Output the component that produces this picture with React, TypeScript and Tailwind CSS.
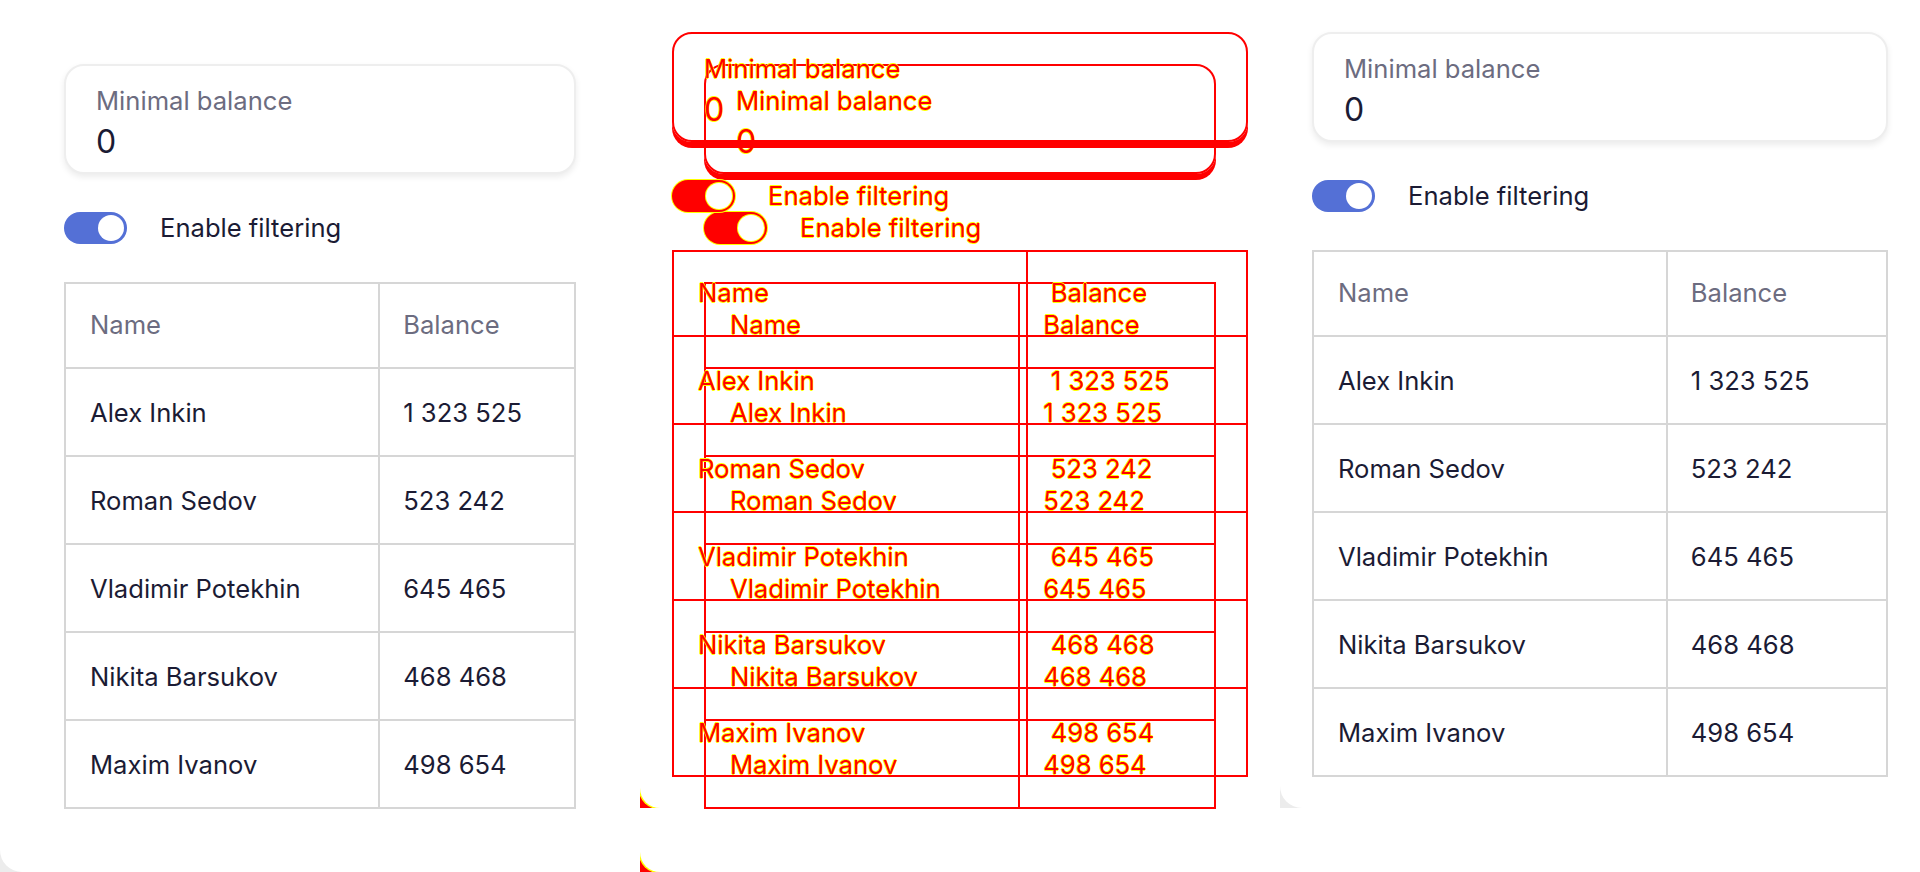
import React from 'react';

type V = 'L' | 'R';

const rows: [string, string][] = [
  ['Alex Inkin', '1 323 525'],
  ['Roman Sedov', '523 242'],
  ['Vladimir Potekhin', '645 465'],
  ['Nikita Barsukov', '468 468'],
  ['Maxim Ivanov', '498 654'],
];

const D =
  'text-[#ff0000] [text-shadow:0.6px_0_0_#ffff00,-0.6px_0_0_#ffff00,0_0.6px_0_#ffff00,0_-0.6px_0_#ffff00]';

function Card({ diff }: { diff: boolean }) {
  return (
    <div
      className={`flex flex-col gap-[8px] rounded-[20px] border-2 pt-[20px] pb-[12px] pl-[30px] ${
        diff
          ? 'border-[#ff0000] shadow-[0_6px_0_0_#ff0000]'
          : 'bg-white border-[#eeeeee] shadow-[0_3px_6px_rgba(0,0,0,0.08)]'
      }`}
    >
      <div className={`text-[25.6px] leading-[30px] ${diff ? D : 'text-[#6c6c80]'}`}>Minimal balance</div>
      <div className={`text-[32px] leading-[36px] ${diff ? D : 'text-[#1b1b34]'}`}>0</div>
    </div>
  );
}

function Toggle({ diff }: { diff: boolean }) {
  return (
    <div className="flex h-[32px] items-center gap-[33px]">
      <div
        className={`flex h-[32px] w-[63px] items-center justify-end rounded-full pr-[3px] ${
          diff ? 'bg-[#ff0000] shadow-[0_0_0_1px_#ffff00]' : 'bg-[#5470d6]'
        }`}
      >
        <div
          className={`h-[26px] w-[26px] rounded-full bg-white ${diff ? 'shadow-[0_0_0_1px_#ffff00]' : ''}`}
        />
      </div>
      <span className={`text-[25.6px] leading-[32px] ${diff ? D : 'text-[#1b1b34]'}`}>Enable filtering</span>
    </div>
  );
}

function Table({ diff }: { diff: boolean }) {
  const line = diff ? 'border-[#ff0000]' : 'border-[#d6d6d6]';
  const head = diff ? D : 'text-[#6c6c80]';
  const body = diff ? D : 'text-[#1b1b34]';
  return (
    <div className={`border-2 ${line}`}>
      <div className="grid h-[83px] grid-cols-[313fr_193fr]">
        <div className={`flex items-center border-r-2 pl-[24px] text-[25.6px] ${line} ${head}`}>Name</div>
        <div className={`flex items-center pl-[23px] text-[25.6px] ${head}`}>Balance</div>
      </div>
      {rows.map(([n, b]) => (
        <div key={n} className={`grid h-[88px] grid-cols-[313fr_193fr] border-t-2 ${line}`}>
          <div className={`flex items-center border-r-2 pl-[24px] pt-[2px] text-[25.6px] ${line} ${body}`}>{n}</div>
          <div className={`flex items-center pl-[23px] pt-[2px] text-[25.6px] ${body}`}>{b}</div>
        </div>
      ))}
    </div>
  );
}

function Screen({ v, diff }: { v: V; diff: boolean }) {
  return (
    <div className={`flex flex-col gap-[38px] ${v === 'L' ? 'p-[64px]' : 'p-[32px]'}`}>
      <Card diff={diff} />
      <Toggle diff={diff} />
      <Table diff={diff} />
    </div>
  );
}

function Shot({ v }: { v: V }) {
  return (
    <div className={`w-[640px] bg-[#ececec] ${v === 'L' ? 'h-[872px]' : 'h-[808px]'}`}>
      <div className="h-full rounded-bl-[22px] bg-white">
        <Screen v={v} diff={false} />
      </div>
    </div>
  );
}

function Wedge() {
  return (
    <div className="absolute bottom-0 left-0 h-[20px] w-[20px] overflow-hidden bg-[#ff0000]">
      <div className="h-full w-full rounded-bl-[20px] bg-white shadow-[0_0_0_1.5px_#ffff00]" />
    </div>
  );
}

export default function App() {
  return (
    <div className="flex h-[872px] w-[1920px] overflow-hidden bg-white [font-family:Inter,'Noto_Sans',sans-serif]">
      <div className="w-[640px] shrink-0">
        <Shot v="L" />
      </div>
      <div className="relative h-[872px] w-[640px] shrink-0 bg-white">
        <div className="absolute left-0 top-0 h-[872px] w-[640px]">
          <Screen v="L" diff />
          <Wedge />
        </div>
        <div className="absolute left-0 top-0 h-[808px] w-[640px]">
          <Screen v="R" diff />
          <Wedge />
        </div>
      </div>
      <div className="w-[640px] shrink-0">
        <Shot v="R" />
      </div>
    </div>
  );
}
